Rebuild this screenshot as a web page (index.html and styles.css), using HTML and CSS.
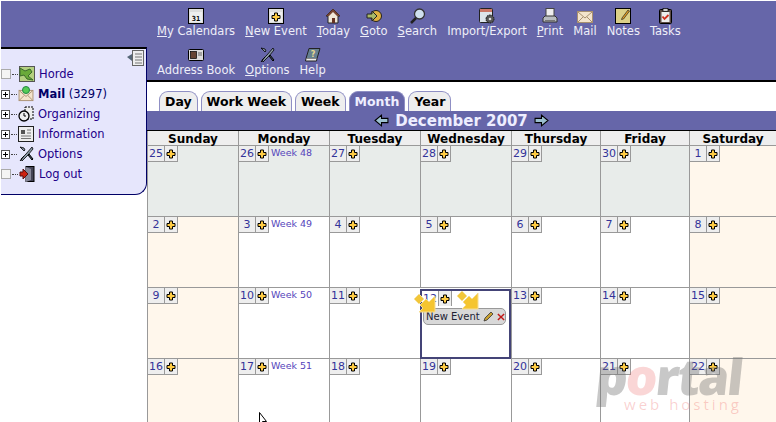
FILE: index.html
```html
<!DOCTYPE html>
<html lang="en">
<head>
<meta charset="utf-8"/>
<title>Calendar :: Month</title>
<meta content="width=device-width, initial-scale=1.0" name="viewport"/>
<link rel="stylesheet" href="styles.css">
</head>
<body>
<svg class="defs" width="0" height="0">
<defs>
<symbol id="plus" viewBox="0 0 10 10"><path d="M3.500 1h3v2.500h2.500v3h-2.500v2.500h-3v-2.500h-2.500v-3h2.500z" fill="#ffcc44" stroke="#000" stroke-width="1"/></symbol>
<symbol id="tools" viewBox="0 0 16 16"><path d="M2 1l4 4 1-1-1-2zM14 1l-6 7-5 5 1 2 6-6 5-6z" fill="#8a9aa8" stroke="#000" stroke-width=".8"/><path d="M2 15l4-5M10 9l4 5 1-1-4-5z" fill="#445566" stroke="#000"/></symbol>
<symbol id="envelope" viewBox="0 0 16 14"><rect x=".5" y="1.500" width="15" height="11" fill="#f4e4cc" stroke="#a89070"/><path d="M1 2l7 6 7-6M1 12l5-5M15 12l-5-5" fill="none" stroke="#a89070"/></symbol>
<symbol id="arrow-l" viewBox="0 0 14 12"><path d="M1 6l6-5v3h6v4h-6v3z" fill="#9cc0d0" stroke="#000"/></symbol>
<symbol id="arrow-r" viewBox="0 0 14 12"><path d="M13 6l-6-5v3h-6v4h6v3z" fill="#9cc0d0" stroke="#000"/></symbol>
<symbol id="drag" viewBox="0 0 22 20"><path d="M0 6l5-5 5 5-5 5z" fill="#f2c63a" stroke="#f6e2a0"/><path d="M21 3v16h-16l4-4-3-3 6-6 3 3z" fill="#f5c530" stroke="#f6dc90"/></symbol>
</defs>
</svg>

<header class="topbar">
<div class="toolrow">
<a class="tool" href="#"><svg class="ico" width="16" height="16" viewBox="0 0 16 16"><rect x=".5" y=".5" width="15" height="15" fill="#ddd" stroke="#000"/><rect x="2" y="4" width="12" height="10" fill="#eee"/><text x="8" y="12.500" class="calnum">31</text></svg><span><u>M</u>y Calendars</span></a>
<a class="tool" href="#"><svg class="ico" width="16" height="16" viewBox="0 0 16 16"><rect x=".5" y=".5" width="15" height="15" fill="#ddd" stroke="#000"/><rect x="2" y="4" width="12" height="10" fill="#eee"/><use href="#plus" x="3" y="4" width="10" height="10"/></svg><span><u>N</u>ew Event</span></a>
<a class="tool" href="#"><svg class="ico" width="16" height="16" viewBox="0 0 16 16"><path d="M1 8l7-7 7 7h-2v7h-10v-7z" fill="#f0e8d8" stroke="#222"/><path d="M8 1l7 7h-3l-4-4-4 4h-3z" fill="#774433"/><rect x="7" y="10" width="3" height="5" fill="#663322"/></svg><span><u>T</u>oday</span></a>
<a class="tool" href="#"><svg class="ico" width="16" height="16" viewBox="0 0 16 16"><circle cx="10" cy="8" r="5.500" fill="#e0b040" stroke="#222"/><path d="M1 6h5v-3l5 5-5 5v-3h-5z" fill="#a8b868" stroke="#222"/></svg><span><u>G</u>oto</span></a>
<a class="tool" href="#"><svg class="ico" width="17" height="16" viewBox="0 0 17 16"><circle cx="10.500" cy="6" r="5" fill="#cfe0ee" stroke="#333" stroke-width="1.300"/><path d="M7 10l-5 5" stroke="#222" stroke-width="2.500"/></svg><span><u>S</u>earch</span></a>
<a class="tool" href="#"><svg class="ico" width="16" height="16" viewBox="0 0 16 16"><rect x=".5" y=".5" width="13" height="14" rx="1" fill="#dde4ea" stroke="#222"/><rect x="1" y="1" width="12" height="3" fill="#cc7766"/><circle cx="11" cy="11" r="4" fill="#555" stroke="#111" stroke-dasharray="1.500 1"/><circle cx="11" cy="11" r="1.300" fill="#ddd"/></svg><span>Import/Export</span></a>
<a class="tool" href="#"><svg class="ico" width="16" height="16" viewBox="0 0 16 16"><rect x="4" y=".5" width="8" height="8" fill="#eee" stroke="#444"/><path d="M1 14v-4l2-2h10l2 2v4z" fill="#b8bcc0" stroke="#333"/><rect x="3" y="12" width="10" height="2" fill="#777"/></svg><span><u>P</u>rint</span></a>
<a class="tool" href="#"><svg class="ico mailico" width="16" height="14"><use href="#envelope"/></svg><span>Mail</span></a>
<a class="tool" href="#"><svg class="ico" width="16" height="16" viewBox="0 0 16 16"><rect x=".5" y=".5" width="15" height="15" fill="#dcd088" stroke="#000"/><path d="M7 10l6-8 1.500 1-6 8-2 .5z" fill="#e8a020" stroke="#222" stroke-width=".7"/></svg><span>Notes</span></a>
<a class="tool" href="#"><svg class="ico" width="13" height="16" viewBox="0 0 13 16"><rect x=".5" y="1.500" width="12" height="14" rx="1" fill="#5a4a44" stroke="#000"/><rect x="2.500" y="4" width="8" height="10" fill="#eee"/><rect x="4" y=".5" width="5" height="3" fill="#ccc" stroke="#000" stroke-width=".7"/><path d="M3.500 8.500l2 2.500 4-4" fill="none" stroke="#d03020" stroke-width="1.800"/></svg><span>Tasks</span></a>
</div>
<div class="toolrow">
<a class="tool" href="#"><svg class="ico" width="16" height="12" viewBox="0 0 16 12"><rect x=".5" y=".5" width="15" height="11" rx="1" fill="#ddd" stroke="#000"/><rect x="2.500" y="2.500" width="6" height="7" fill="#664433" stroke="#000" stroke-width=".7"/><path d="M10 4h4M10 6h4" stroke="#666"/></svg><span>Address Book</span></a>
<a class="tool" href="#"><svg class="ico" width="16" height="16"><use href="#tools"/></svg><span><u>O</u>ptions</span></a>
<a class="tool" href="#"><svg class="ico" width="16" height="15" viewBox="0 0 16 15"><path d="M4 1h11l-3 10h-11z" fill="#668090" stroke="#222"/><path d="M1 11l-.5 2.500h11l.5-2.500" fill="#eee" stroke="#222"/><text x="8" y="9" class="helpq">?</text></svg><span>Help</span></a>
</div>
</header>

<aside class="sidebar">
<svg class="collapse" width="18" height="16" viewBox="0 0 18 16"><rect x="5.500" y=".5" width="11" height="15" fill="#eee" stroke="#666"/><path d="M8 4h7M8 7h7M8 10h7M8 13h7" stroke="#777"/><path d="M0 7l5-3v7z" fill="#556677"/></svg>
<div class="navitem"><span class="node"></span><span class="dots"></span><svg width="16" height="16" viewBox="0 0 16 16"><rect x=".5" y=".5" width="15" height="15" fill="#b4d080" stroke="#555"/><path d="M1 2l5 3 5-2 2 3-4 4 5 4-6-1-3-4-4 1z" fill="#6aaa3a" stroke="#3a6a2a"/></svg><a class="navlink horde" href="#">Horde</a></div>
<div class="navitem"><span class="node plus"></span><span class="dots"></span><svg width="16" height="16" viewBox="0 0 16 16"><use href="#envelope" y="3" width="16" height="13"/><circle cx="8" cy="4" r="3.500" fill="#5c5" stroke="#284"/></svg><a class="navlink mail" href="#"><b>Mail</b> (3297)</a></div>
<div class="navitem"><span class="node plus"></span><span class="dots"></span><svg width="16" height="16" viewBox="0 0 16 16"><rect x="7" y="1" width="8" height="12" fill="#eee" stroke="#000" stroke-dasharray="2 1"/><circle cx="6" cy="10" r="5" fill="#eee" stroke="#000" stroke-width="1.300"/><path d="M6 7v3h2" fill="none" stroke="#000"/></svg><a class="navlink" href="#">Organizing</a></div>
<div class="navitem"><span class="node plus"></span><span class="dots"></span><svg width="16" height="16" viewBox="0 0 16 16"><rect x=".5" y=".5" width="15" height="15" fill="#eee" stroke="#222"/><rect x="3" y="4" width="4" height="4" fill="#555"/><path d="M9 4h4M9 7h4M3 10h10M3 12.500h10" stroke="#777"/></svg><a class="navlink" href="#">Information</a></div>
<div class="navitem"><span class="node plus"></span><span class="dots"></span><svg width="16" height="16"><use href="#tools"/></svg><a class="navlink" href="#">Options</a></div>
<div class="navitem"><span class="node"></span><span class="dots"></span><svg width="16" height="16" viewBox="0 0 16 16"><rect x="7" y=".5" width="8" height="15" fill="#445" stroke="#000"/><path d="M7 1l5 2v11l-5 2z" fill="#889"/><path d="M1 6h3v-3l5 5-5 5v-3h-3z" fill="#cc2211" stroke="#511"/></svg><a class="navlink logout" href="#">Log out</a></div>
</aside>

<main class="content">
<nav class="tabs">
<a class="tab" href="#">Day</a>
<a class="tab" href="#">Work Week</a>
<a class="tab" href="#">Week</a>
<a class="tab active" href="#">Month</a>
<a class="tab" href="#">Year</a>
</nav>
<div class="monthbar">
<svg width="15" height="13"><use href="#arrow-l"/></svg>
<span class="monthname">December 2007</span>
<svg width="15" height="13"><use href="#arrow-r"/></svg>
</div>
<div class="cal">
<div class="dow">Sunday</div><div class="dow">Monday</div><div class="dow">Tuesday</div><div class="dow">Wednesday</div><div class="dow">Thursday</div><div class="dow">Friday</div><div class="dow">Saturday</div>

<div class="cell past"><a class="num" href="#">25</a><a class="add" href="#"><svg width="10" height="10"><use href="#plus"/></svg></a></div>
<div class="cell past"><a class="num" href="#">26</a><a class="add" href="#"><svg width="10" height="10"><use href="#plus"/></svg></a><a class="wk" href="#">Week 48</a></div>
<div class="cell past"><a class="num" href="#">27</a><a class="add" href="#"><svg width="10" height="10"><use href="#plus"/></svg></a></div>
<div class="cell past"><a class="num" href="#">28</a><a class="add" href="#"><svg width="10" height="10"><use href="#plus"/></svg></a></div>
<div class="cell past"><a class="num" href="#">29</a><a class="add" href="#"><svg width="10" height="10"><use href="#plus"/></svg></a></div>
<div class="cell past"><a class="num" href="#">30</a><a class="add" href="#"><svg width="10" height="10"><use href="#plus"/></svg></a></div>
<div class="cell weekend"><a class="num" href="#">1</a><a class="add" href="#"><svg width="10" height="10"><use href="#plus"/></svg></a></div>

<div class="cell weekend"><a class="num" href="#">2</a><a class="add" href="#"><svg width="10" height="10"><use href="#plus"/></svg></a></div>
<div class="cell"><a class="num" href="#">3</a><a class="add" href="#"><svg width="10" height="10"><use href="#plus"/></svg></a><a class="wk" href="#">Week 49</a></div>
<div class="cell"><a class="num" href="#">4</a><a class="add" href="#"><svg width="10" height="10"><use href="#plus"/></svg></a></div>
<div class="cell"><a class="num" href="#">5</a><a class="add" href="#"><svg width="10" height="10"><use href="#plus"/></svg></a></div>
<div class="cell"><a class="num" href="#">6</a><a class="add" href="#"><svg width="10" height="10"><use href="#plus"/></svg></a></div>
<div class="cell"><a class="num" href="#">7</a><a class="add" href="#"><svg width="10" height="10"><use href="#plus"/></svg></a></div>
<div class="cell weekend"><a class="num" href="#">8</a><a class="add" href="#"><svg width="10" height="10"><use href="#plus"/></svg></a></div>

<div class="cell weekend"><a class="num" href="#">9</a><a class="add" href="#"><svg width="10" height="10"><use href="#plus"/></svg></a></div>
<div class="cell"><a class="num" href="#">10</a><a class="add" href="#"><svg width="10" height="10"><use href="#plus"/></svg></a><a class="wk" href="#">Week 50</a></div>
<div class="cell"><a class="num" href="#">11</a><a class="add" href="#"><svg width="10" height="10"><use href="#plus"/></svg></a></div>
<div class="cell today">
<a class="num plain" href="#">12</a><a class="add plain" href="#"><svg width="10" height="10"><use href="#plus"/></svg></a>
<div class="event"><span class="evtitle">New Event</span>
<svg width="11" height="11" viewBox="0 0 11 11"><path d="M1 10l1-3 6-6 2 2-6 6z" fill="#c8a030" stroke="#333" stroke-width=".8"/></svg>
<svg width="8" height="8" viewBox="0 0 9 9"><path d="M1 1l7 7M8 1l-7 7" stroke="#c01818" stroke-width="1.600"/></svg>
</div>
<svg class="drag drag-a" width="22" height="20"><use href="#drag"/></svg>
<svg class="drag drag-b" width="22" height="20"><use href="#drag"/></svg>
</div>
<div class="cell"><a class="num" href="#">13</a><a class="add" href="#"><svg width="10" height="10"><use href="#plus"/></svg></a></div>
<div class="cell"><a class="num" href="#">14</a><a class="add" href="#"><svg width="10" height="10"><use href="#plus"/></svg></a></div>
<div class="cell weekend"><a class="num" href="#">15</a><a class="add" href="#"><svg width="10" height="10"><use href="#plus"/></svg></a></div>

<div class="cell weekend"><a class="num" href="#">16</a><a class="add" href="#"><svg width="10" height="10"><use href="#plus"/></svg></a></div>
<div class="cell"><a class="num" href="#">17</a><a class="add" href="#"><svg width="10" height="10"><use href="#plus"/></svg></a><a class="wk" href="#">Week 51</a></div>
<div class="cell"><a class="num" href="#">18</a><a class="add" href="#"><svg width="10" height="10"><use href="#plus"/></svg></a></div>
<div class="cell"><a class="num" href="#">19</a><a class="add" href="#"><svg width="10" height="10"><use href="#plus"/></svg></a></div>
<div class="cell"><a class="num" href="#">20</a><a class="add" href="#"><svg width="10" height="10"><use href="#plus"/></svg></a></div>
<div class="cell"><a class="num" href="#">21</a><a class="add" href="#"><svg width="10" height="10"><use href="#plus"/></svg></a></div>
<div class="cell weekend"><a class="num" href="#">22</a><a class="add" href="#"><svg width="10" height="10"><use href="#plus"/></svg></a></div>
</div>
</main>

<div class="watermark"><span class="wm-big">p<span class="wm-o">o</span>rtal</span><span class="wm-small">web hosting</span></div>
<svg class="cursor" width="12" height="10" viewBox="0 0 12 10"><path d="M.5 .5v12l3-3 4 0z" fill="#fff" stroke="#000"/></svg>
</body>
</html>
```
FILE: styles.css
```css
html, body { height: 100%; }
body {
    margin: 0;
    width: 776px;
    height: 422px;
    overflow: hidden;
    position: relative;
    background: #fff;
    font-family: "DejaVu Sans", Verdana, sans-serif;
    font-size: 12px;
}
a { text-decoration: none; color: inherit; }
svg { display: block; flex: none; }
.defs { position: absolute; }

/* top toolbar */
.topbar {
    margin: 1px 0 0 1px;
    height: 79px;
    padding-left: 156px;
    background: #6666a9;
    border-bottom: 2px solid #000;
}
.toolrow {
    display: flex;
    gap: 10px;
    height: 39px;
    padding-top: 7px;
    box-sizing: border-box;
}
.tool {
    display: flex;
    flex-direction: column;
    align-items: center;
    color: #eeeef8;
    font-size: 11.500px;
    line-height: 15px;
    white-space: nowrap;
}
.ico { height: 16px; }
.mailico { margin-top: 2px; height: 14px; }
.calnum { font: bold 7px "DejaVu Sans Mono", monospace; text-anchor: middle; fill: #000; }
.helpq { font: bold 8px "DejaVu Sans", sans-serif; text-anchor: middle; fill: #e8d890; }

/* left menu */
.sidebar {
    position: absolute;
    left: 1px;
    top: 47px;
    width: 146px;
    height: 148px;
    box-sizing: border-box;
    padding-top: 15px;
    background: #e6e6fc;
    border-top: 2px solid #000;
    border-right: 1px solid #000066;
    border-bottom: 1px solid #000066;
    border-bottom-right-radius: 12px;
}
.collapse { position: absolute; right: 1px; top: 1px; }
.navitem {
    display: flex;
    align-items: center;
    height: 20px;
    color: #220088;
}
.node {
    width: 8px;
    height: 8px;
    border: 1px solid #aaa;
    background: #f4f4f4;
    flex: none;
}
.node.plus {
    width: 7px;
    height: 7px;
    border-color: #555;
    background:
        linear-gradient(#000, #000) center / 5px 1px no-repeat,
        linear-gradient(#000, #000) center / 1px 5px no-repeat,
        #fff;
}
.dots {
    width: 6px;
    margin: 0 1px;
    border-top: 1px dotted #444;
    flex: none;
}
.navitem .dots + svg { margin-right: 4px; }
.navlink { font-size: 11.500px; white-space: nowrap; }
.mail, .mail b { color: #000066; }

/* tabs + month title */
.content { margin-left: 147px; }
.tabs {
    display: flex;
    gap: 3px;
    height: 20px;
    margin-top: 9px;
    padding-left: 12px;
}
.tab {
    height: 20px;
    box-sizing: border-box;
    padding: 1px 5px 0;
    background: #eeeeee;
    border: 1px solid #8f8fc4;
    border-bottom: 0;
    border-radius: 9px 9px 0 0;
    color: #000;
    font-size: 12.500px;
    font-weight: bold;
    line-height: 18px;
    white-space: nowrap;
}
.tab.active { background: #6666a9; color: #eeeeff; }
.monthbar {
    display: flex;
    justify-content: center;
    align-items: center;
    gap: 6px;
    height: 19px;
    box-sizing: content-box;
    background: #6666a9;
    border-bottom: 1px solid #000;
}
.monthname { padding-top: 2px; color: #eeeeff; font-size: 15px; font-weight: bold; line-height: 17px; }

/* month grid */
.cal {
    display: grid;
    grid-template-columns: 91px 91px 91px 91px 89px 89px 87px;
    grid-template-rows: 15px 71px 71px 71px 64px;
}
.dow {
    box-sizing: border-box;
    border-left: 1px solid #999;
    border-bottom: 1px solid #999;
    background: #eeeeee;
    color: #000;
    font-size: 12px;
    font-weight: bold;
    line-height: 16px;
    text-align: center;
}
.cell {
    position: relative;
    display: flex;
    flex-wrap: wrap;
    align-content: flex-start;
    box-sizing: border-box;
    border-left: 1px solid #999;
    border-bottom: 1px solid #999;
    background: #fff;
}
.cell.past { background: #e8ecea; }
.cell.weekend { background: #fff7ec; }
.num {
    width: 16px;
    height: 15px;
    background: #eeeeee;
    border-right: 1px solid #999;
    border-bottom: 1px solid #999;
    color: #333399;
    font-size: 11px;
    line-height: 16px;
    text-align: center;
}
.add {
    display: flex;
    align-items: center;
    justify-content: center;
    width: 12px;
    height: 15px;
    background: #eeeeee;
    border-right: 1px solid #999;
    border-bottom: 1px solid #999;
}
.wk { margin-left: 2px; color: #5544bb; font-size: 9.500px; line-height: 14px; }
.cell.today { border: 2px solid #444477; margin-top: 1px; }
.num.plain { border-bottom: 0; background: #fff; }
.add.plain { border-bottom: 0; }
.event {
    display: flex;
    align-items: center;
    gap: 3px;
    width: 83px;
    height: 17px;
    box-sizing: border-box;
    margin: 2px 0 0 1px;
    padding-left: 2px;
    background: #d8d8d8;
    border: 1px solid #999;
    border-radius: 5px;
    color: #222233;
    white-space: nowrap;
}
.evtitle { font-size: 10px; }
.drag { position: absolute; top: 2px; }
.drag-a { left: -8px; }
.drag-b { left: 35px; top: -1px; }

/* overlays */
.watermark {
    position: absolute;
    left: 596px;
    top: 359px;
    display: flex;
    flex-direction: column;
    align-items: flex-end;
    width: 146px;
    pointer-events: none;
}
.wm-big {
    height: 37px;
    font: 800 50px/34px "Open Sans", sans-serif;
    letter-spacing: -2px;
    transform: skewX(-6deg);
    color: rgba(110, 110, 110, .38);
}
.wm-o { color: rgba(235, 90, 90, .25); }
.wm-small {
    font: 15px/16px "Open Sans", sans-serif;
    letter-spacing: 3px;
    color: rgba(235, 90, 90, .28);
}
.cursor { position: absolute; left: 259px; top: 412px; }
```
